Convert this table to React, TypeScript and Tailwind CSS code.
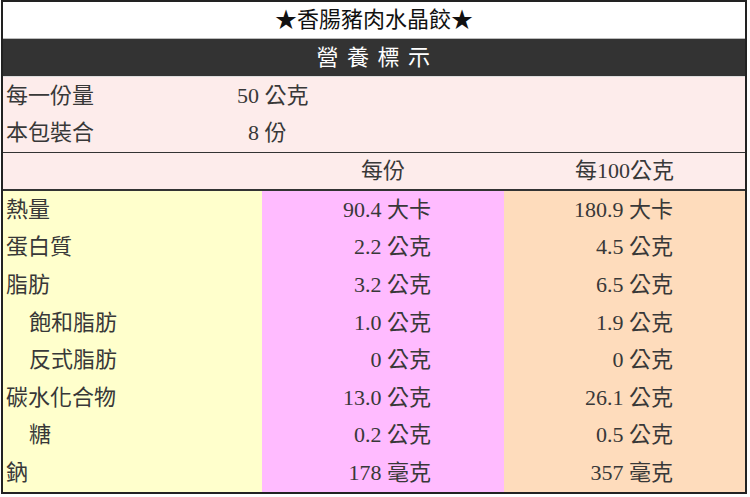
import React from "react";

const rows: { label: string; indent?: boolean; a: string; b: string }[] = [
  { label: "熱量", a: "90.4 大卡", b: "180.9 大卡" },
  { label: "蛋白質", a: "2.2 公克", b: "4.5 公克" },
  { label: "脂肪", a: "3.2 公克", b: "6.5 公克" },
  { label: "飽和脂肪", indent: true, a: "1.0 公克", b: "1.9 公克" },
  { label: "反式脂肪", indent: true, a: "0 公克", b: "0 公克" },
  { label: "碳水化合物", a: "13.0 公克", b: "26.1 公克" },
  { label: "糖", indent: true, a: "0.2 公克", b: "0.5 公克" },
  { label: "鈉", a: "178 毫克", b: "357 毫克" },
];

const font = { fontFamily: '"Liberation Serif", "Noto Sans CJK TC", serif' };

export default function App() {
  return (
    <div className="w-[750px] h-[497px] bg-white overflow-hidden" style={font}>
      <div className="ml-px w-[746px] border-2 border-[#222] text-[22px] leading-none text-[#383838]">
        <div className="h-[36px] flex items-center justify-center text-[#111] bg-white">
          ★香腸豬肉水晶餃★
        </div>
        <div className="h-px bg-[#bbb]" />
        <div className="h-[37px] flex items-center justify-center bg-[#333] text-white tracking-[1.5px]">
          營 養 標 示
        </div>
        <div className="h-px bg-[#ddd]" />
        <div className="bg-[#fdeceb]">
          <div className="h-[37px] flex items-center">
            <span className="pl-[3px] w-[234px]">每一份量</span>
            <span>50 公克</span>
          </div>
          <div className="h-[38px] flex items-center">
            <span className="pl-[3px] w-[245px]">本包裝合</span>
            <span>8 份</span>
          </div>
        </div>
        <div className="h-px bg-[#333]" />
        <div className="h-[36px] flex items-center bg-[#fdeceb]">
          <div className="w-[259px]" />
          <div className="w-[242px] text-center">每份</div>
          <div className="flex-1 text-center">每100公克</div>
        </div>
        <div className="h-[2px] bg-[#333]" />
        <div className="flex flex-col">
          {rows.map((r) => (
            <div key={r.label} className="h-[37.6px] flex">
              <div className={`w-[259px] bg-[#ffffcc] flex items-center ${r.indent ? "pl-[26px]" : "pl-[3px]"}`}>
                {r.label}
              </div>
              <div className="w-[242px] bg-[#ffbbff] flex items-center justify-end pr-[73px]">{r.a}</div>
              <div className="flex-1 bg-[#fedcbc] flex items-center justify-end pr-[72px]">{r.b}</div>
            </div>
          ))}
        </div>
      </div>
    </div>
  );
}
